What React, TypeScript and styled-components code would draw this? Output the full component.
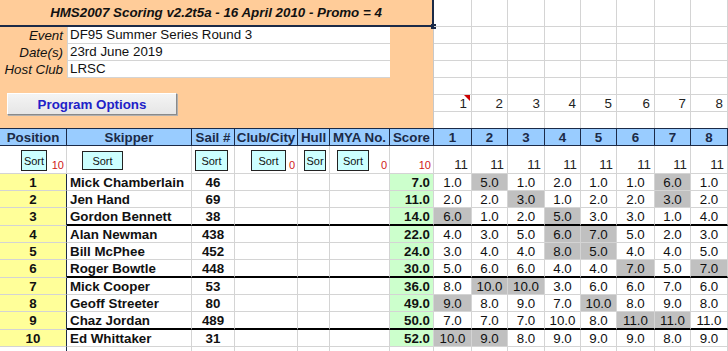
import React from 'react';
import styled, { createGlobalStyle } from 'styled-components';

const NAVY = '#1B2A47';
const GRID = '#D4D4D4';

const FIXED_COLS = [67, 125, 43, 63, 32, 60, 44];
const RACE_COLS = [38, 36, 37, 36, 36, 38, 36, 37];

type Result = {
  pos: number;
  skipper: string;
  sail: string;
  score: string;
  races: string[];
  discards: number[];
};

const results: Result[] = [
  { pos: 1, skipper: 'Mick Chamberlain', sail: '46', score: '7.0', races: ['1.0', '5.0', '1.0', '2.0', '1.0', '1.0', '6.0', '1.0'], discards: [1, 6] },
  { pos: 2, skipper: 'Jen Hand', sail: '69', score: '11.0', races: ['2.0', '2.0', '3.0', '1.0', '2.0', '2.0', '3.0', '2.0'], discards: [2, 6] },
  { pos: 3, skipper: 'Gordon Bennett', sail: '38', score: '14.0', races: ['6.0', '1.0', '2.0', '5.0', '3.0', '3.0', '1.0', '4.0'], discards: [0, 3] },
  { pos: 4, skipper: 'Alan Newman', sail: '438', score: '22.0', races: ['4.0', '3.0', '5.0', '6.0', '7.0', '5.0', '2.0', '3.0'], discards: [3, 4] },
  { pos: 5, skipper: 'Bill McPhee', sail: '452', score: '24.0', races: ['3.0', '4.0', '4.0', '8.0', '5.0', '4.0', '4.0', '5.0'], discards: [3, 4] },
  { pos: 6, skipper: 'Roger Bowtle', sail: '448', score: '30.0', races: ['5.0', '6.0', '6.0', '4.0', '4.0', '7.0', '5.0', '7.0'], discards: [5, 7] },
  { pos: 7, skipper: 'Mick Cooper', sail: '53', score: '36.0', races: ['8.0', '10.0', '10.0', '3.0', '6.0', '6.0', '7.0', '6.0'], discards: [1, 2] },
  { pos: 8, skipper: 'Geoff Streeter', sail: '80', score: '49.0', races: ['9.0', '8.0', '9.0', '7.0', '10.0', '8.0', '9.0', '8.0'], discards: [0, 4] },
  { pos: 9, skipper: 'Chaz Jordan', sail: '489', score: '50.0', races: ['7.0', '7.0', '7.0', '10.0', '8.0', '11.0', '11.0', '11.0'], discards: [5, 6] },
  { pos: 10, skipper: 'Ed Whittaker', sail: '31', score: '52.0', races: ['10.0', '9.0', '8.0', '9.0', '9.0', '9.0', '8.0', '9.0'], discards: [0, 1] },
];

const headers = ['Position', 'Skipper', 'Sail #', 'Club/City', 'Hull', 'MYA No.', 'Score'];

// Excel form buttons sit on the sort row, offset inside their cell
const sortRow = [
  { left: 21, width: 26, top: 4, height: 21, label: 'Sort', count: '10' },
  { left: 15, width: 41, top: 5, height: 19, label: 'Sort' },
  { left: 3, width: 33, top: 4, height: 21, label: 'Sort' },
  { left: 16, width: 35, top: 4, height: 21, label: 'Sort', count: '0' },
  { left: 6, width: 22, top: 4, height: 21, label: 'Sor' },
  { left: 7, width: 32, top: 4, height: 21, label: 'Sort', count: '0' },
  { count: '10' },
];

const GlobalStyle = createGlobalStyle`
  html, body {
    margin: 0;
    padding: 0;
    background: #fff;
  }
  body {
    font-family: "Liberation Sans", Arial, sans-serif;
    font-size: 13.33px;
    color: #000;
    overflow: hidden;
  }
`;

const Sheet = styled.div`
  width: 728px;
  height: 351px;
  overflow: hidden;
`;

const Top = styled.div`
  display: flex;
  height: 128px;
`;

const Banner = styled.div`
  width: 434px;
  flex-shrink: 0;
  background: #ffcc99;
  box-shadow: inset -1px 0 0 #c8c8c8;
  display: flex;
  flex-direction: column;
`;

const Title = styled.div`
  position: relative;
  height: 27px;
  box-sizing: border-box;
  border-bottom: 2px solid ${NAVY};
  border-right: 2px solid ${NAVY};
  display: flex;
  align-items: center;
  justify-content: center;
  font-weight: bold;
  font-style: italic;
  color: #111;
`;

const FillHandle = styled.span`
  position: absolute;
  right: -4px;
  bottom: -4px;
  width: 5px;
  height: 5px;
  background: ${NAVY};
`;

const InfoRow = styled.div`
  display: flex;
  height: 17px;
`;

const InfoLabel = styled.div`
  width: 63px;
  padding-right: 4px;
  text-align: right;
  font-style: italic;
  line-height: 17px;
  color: #111;
`;

const InfoValue = styled.div`
  width: 323px;
  box-sizing: border-box;
  background: #fff;
  border-left: 1px solid ${GRID};
  border-bottom: 1px solid ${GRID};
  padding-left: 2px;
  line-height: 16px;
  color: #111;
`;

const ButtonRow = styled.div`
  padding: 15px 0 0 7px;
`;

const OptionsButton = styled.button`
  width: 170px;
  height: 22px;
  box-sizing: border-box;
  background: linear-gradient(#f4f4f4, #e6e6e6);
  border: 1px solid;
  border-color: #ffffff #8a8a8a #8a8a8a #ffffff;
  box-shadow: 1px 1px 0 #b0b0b0;
  font-family: inherit;
  font-size: 13.33px;
  font-weight: bold;
  color: #2121c8;
  padding: 0;
`;

const RaceGrid = styled.div`
  display: grid;
  grid-template-columns: ${RACE_COLS.map((w) => `${w}px`).join(' ')};
  grid-template-rows: 27px repeat(5, 17px) 16px;
`;

const BlankCell = styled.div<{ $last?: boolean }>`
  position: relative;
  box-sizing: border-box;
  border-right: 1px solid ${GRID};
  border-bottom: ${(p) => (p.$last ? 'none' : `1px solid ${GRID}`)};
  display: flex;
  align-items: center;
  justify-content: flex-end;
  padding-right: 4px;
  color: #222;
`;

const CommentMark = styled.span`
  position: absolute;
  top: 0;
  right: 1px;
  width: 0;
  height: 0;
  border-top: 6px solid #cc0000;
  border-left: 6px solid transparent;
`;

const Table = styled.div`
  display: grid;
  grid-template-columns: ${[...FIXED_COLS, ...RACE_COLS].map((w) => `${w}px`).join(' ')};
`;

const HeadCell = styled.div`
  height: 18px;
  box-sizing: border-box;
  background: #99ccff;
  border-top: 1px solid ${NAVY};
  border-bottom: 1px solid ${NAVY};
  border-right: 1px solid ${NAVY};
  display: flex;
  align-items: center;
  justify-content: center;
  font-weight: bold;
  color: ${NAVY};
  white-space: nowrap;
  overflow: hidden;
`;

const SortCell = styled.div`
  height: 28px;
  box-sizing: border-box;
  border-right: 1px solid ${GRID};
  border-bottom: 1px solid ${GRID};
  display: flex;
  align-items: flex-start;
`;

const SortButton = styled.div<{ $left: number; $top: number; $w: number; $h: number }>`
  margin-left: ${(p) => p.$left}px;
  margin-top: ${(p) => p.$top}px;
  width: ${(p) => p.$w}px;
  height: ${(p) => p.$h}px;
  box-sizing: border-box;
  flex-shrink: 0;
  background: #ccffff;
  border: 1px solid #222;
  display: flex;
  align-items: center;
  justify-content: center;
  font-size: 11px;
  color: #111;
  overflow: hidden;
`;

const Count = styled.span<{ $red?: boolean }>`
  margin-left: auto;
  align-self: flex-end;
  padding: 0 ${(p) => (p.$red ? 2 : 3)}px ${(p) => (p.$red ? 1 : 0)}px 0;
  font-size: ${(p) => (p.$red ? 11 : 13.33)}px;
  line-height: ${(p) => (p.$red ? 13 : 16)}px;
  color: ${(p) => (p.$red ? '#d01818' : '#222')};
`;

type Align = 'left' | 'center' | 'right';

const Cell = styled.div<{ $bg?: string; $bold?: boolean; $align?: Align; $thick?: boolean; $edge?: boolean }>`
  height: ${(p) => (p.$thick ? 18 : 17)}px;
  box-sizing: border-box;
  background: ${(p) => p.$bg || '#fff'};
  border-right: 1px solid ${(p) => (p.$edge ? NAVY : GRID)};
  border-bottom: ${(p) => (p.$thick ? '2px solid #000' : `1px solid ${GRID}`)};
  display: flex;
  align-items: center;
  justify-content: ${(p) => (p.$align === 'left' ? 'flex-start' : p.$align === 'right' ? 'flex-end' : 'center')};
  padding: 0 3px;
  font-weight: ${(p) => (p.$bold ? 'bold' : 'normal')};
  white-space: nowrap;
  color: #111;
`;

// Position column keeps a thin line where the others get the thick group rule
const PosCell = styled(Cell)`
  border-bottom: 1px solid ${GRID};
`;

export default function App() {
  return (
    <Sheet>
      <GlobalStyle />
      <Top>
        <Banner>
          <Title>
            HMS2007 Scoring v2.2t5a - 16 April 2010 - Promo = 4
            <FillHandle />
          </Title>
          <InfoRow>
            <InfoLabel>Event</InfoLabel>
            <InfoValue>DF95 Summer Series Round 3</InfoValue>
          </InfoRow>
          <InfoRow>
            <InfoLabel>Date(s)</InfoLabel>
            <InfoValue>23rd June 2019</InfoValue>
          </InfoRow>
          <InfoRow>
            <InfoLabel>Host Club</InfoLabel>
            <InfoValue>LRSC</InfoValue>
          </InfoRow>
          <ButtonRow>
            <OptionsButton>Program Options</OptionsButton>
          </ButtonRow>
        </Banner>
        <RaceGrid>
          {Array.from({ length: 7 }).map((_, r) =>
            RACE_COLS.map((_, c) => (
              <BlankCell key={`${r}-${c}`} $last={r === 6}>
                {r === 5 && c + 1}
                {r === 5 && c === 0 && <CommentMark />}
              </BlankCell>
            ))
          )}
        </RaceGrid>
      </Top>

      <Table>
        {headers.map((h) => (
          <HeadCell key={h}>{h}</HeadCell>
        ))}
        {RACE_COLS.map((_, i) => (
          <HeadCell key={`h${i}`}>{i + 1}</HeadCell>
        ))}

        {sortRow.map((s, i) => (
          <SortCell key={`s${i}`}>
            {s.label && (
              <SortButton $left={s.left!} $top={s.top!} $w={s.width!} $h={s.height!}>
                {s.label}
              </SortButton>
            )}
            {s.count && <Count $red>{s.count}</Count>}
          </SortCell>
        ))}
        {RACE_COLS.map((_, i) => (
          <SortCell key={`r${i}`}>
            <Count>11</Count>
          </SortCell>
        ))}

        {results.map((r) => {
          const thick = r.pos % 3 === 0;
          return (
            <React.Fragment key={r.pos}>
              <PosCell $bg="#ffff99" $bold $thick={thick} $edge>
                {r.pos}
              </PosCell>
              <Cell $bold $align="left" $thick={thick}>
                {r.skipper}
              </Cell>
              <Cell $bold $thick={thick}>
                {r.sail}
              </Cell>
              <Cell $thick={thick} />
              <Cell $thick={thick} />
              <Cell $thick={thick} />
              <Cell $bg="#ccffcc" $bold $align="right" $thick={thick}>
                {r.score}
              </Cell>
              {r.races.map((v, i) => (
                <Cell key={i} $bg={r.discards.includes(i) ? '#c0c0c0' : undefined} $thick={thick}>
                  {v}
                </Cell>
              ))}
            </React.Fragment>
          );
        })}

        {FIXED_COLS.concat(RACE_COLS).map((_, i) => (
          <Cell key={`e${i}`} $edge={i === 0} />
        ))}
      </Table>
    </Sheet>
  );
}
